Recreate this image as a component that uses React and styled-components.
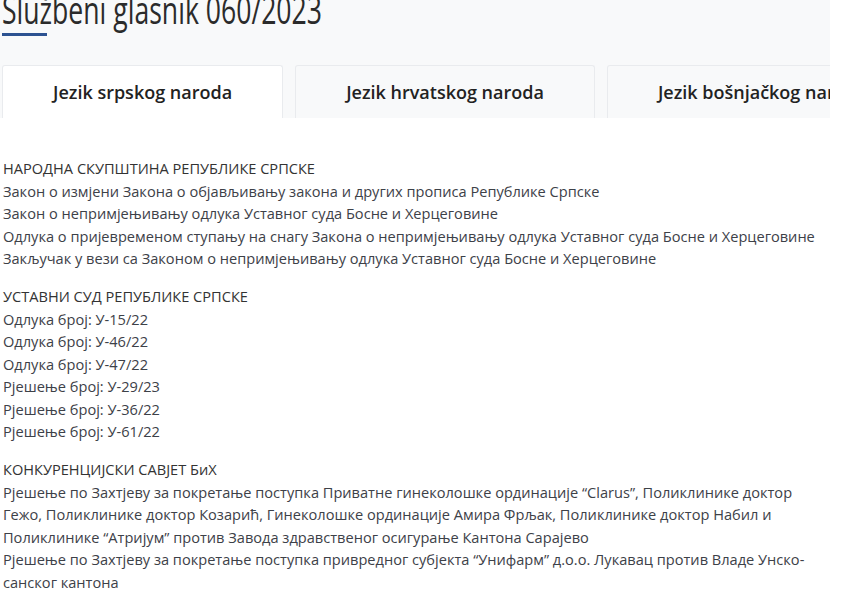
import React from "react";
import styled, { createGlobalStyle } from "styled-components";

const GlobalStyle = createGlobalStyle`
  html, body {
    margin: 0;
    padding: 0;
    background: #fff;
    overflow: hidden;
  }
  body {
    font-family: "Open Sans", "Noto Sans", sans-serif;
    color: #333;
  }
`;

const sections = [
  {
    title: "НАРОДНА СКУПШТИНА РЕПУБЛИКЕ СРПСКЕ",
    items: [
      "Закон о измјени Закона о објављивању закона и других прописа Републике Српске",
      "Закон о непримјењивању одлука Уставног суда Босне и Херцеговине",
      "Одлука о пријевременом ступању на снагу Закона о непримјењивању одлука Уставног суда Босне и Херцеговине",
      "Закључак у вези са Законом о непримјењивању одлука Уставног суда Босне и Херцеговине",
    ],
  },
  {
    title: "УСТАВНИ СУД РЕПУБЛИКЕ СРПСКЕ",
    items: [
      "Одлука број: У-15/22",
      "Одлука број: У-46/22",
      "Одлука број: У-47/22",
      "Рјешење број: У-29/23",
      "Рјешење број: У-36/22",
      "Рјешење број: У-61/22",
    ],
  },
  {
    title: "КОНКУРЕНЦИЈСКИ САВЈЕТ БиХ",
    items: [
      "Рјешење по Захтјеву за покретање поступка Приватне гинеколошке ординације “Clarus”, Поликлинике доктор Гежо, Поликлинике доктор Козарић, Гинеколошке ординације Амира Фрљак, Поликлинике доктор Набил и Поликлинике “Атријум” против Завода здравственог осигурање Кантона Сарајево",
      "Рјешење по Захтјеву за покретање поступка привредног субјекта “Унифарм” д.о.о. Лукавац против Владе Унско-санског кантона",
    ],
  },
];

const tabs = ["Jezik srpskog naroda", "Jezik hrvatskog naroda", "Jezik bošnjačkog naroda"];

const Page = styled.div`
  width: 843px;
  height: 600px;
  overflow: hidden;
`;

const Header = styled.header`
  width: 830px;
  background: #f8f9fa;
  padding: 0 0 0 2px;
  box-sizing: border-box;
  overflow: hidden;
`;

const Title = styled.h1`
  margin: -16px 0 0;
  font-size: 38px;
  font-weight: 400;
  line-height: 50px;
  color: #2b2b2b;
  white-space: nowrap;
  transform: scaleX(0.7);
  transform-origin: left center;
`;

const TitleBar = styled.div`
  width: 45px;
  height: 3px;
  background: #2c5291;
  margin-top: -1px;
`;

const TabRow = styled.nav`
  display: flex;
  gap: 12px;
  margin-top: 29px;
  white-space: nowrap;
`;

const Tab = styled.div`
  flex: none;
  display: flex;
  align-items: center;
  justify-content: center;
  height: 53px;
  padding: 0 50px;
  box-sizing: border-box;
  border: 1px solid #e9ebee;
  border-bottom: none;
  border-radius: 3px 3px 0 0;
  background: ${(p) => (p.$active ? "#fff" : "#f8f9fa")};
  font-size: 18px;
  font-weight: 600;
  color: #222;
`;

const Content = styled.main`
  width: 830px;
  padding: 39px 0 0 3px;
  box-sizing: border-box;
`;

const Section = styled.section`
  margin-bottom: 15.5px;
`;

const Line = styled.div`
  font-size: 14.6px;
  line-height: 22.5px;
  color: ${(p) => (p.$head ? "#333" : "#3d4148")};
`;

export default function App() {
  return (
    <Page>
      <GlobalStyle />
      <Header>
        <Title>Službeni glasnik 060/2023</Title>
        <TitleBar />
        <TabRow>
          {tabs.map((t, i) => (
            <Tab key={t} $active={i === 0}>
              {t}
            </Tab>
          ))}
        </TabRow>
      </Header>
      <Content>
        {sections.map((s) => (
          <Section key={s.title}>
            <Line $head>{s.title}</Line>
            {s.items.map((it) => (
              <Line key={it}>{it}</Line>
            ))}
          </Section>
        ))}
      </Content>
    </Page>
  );
}
